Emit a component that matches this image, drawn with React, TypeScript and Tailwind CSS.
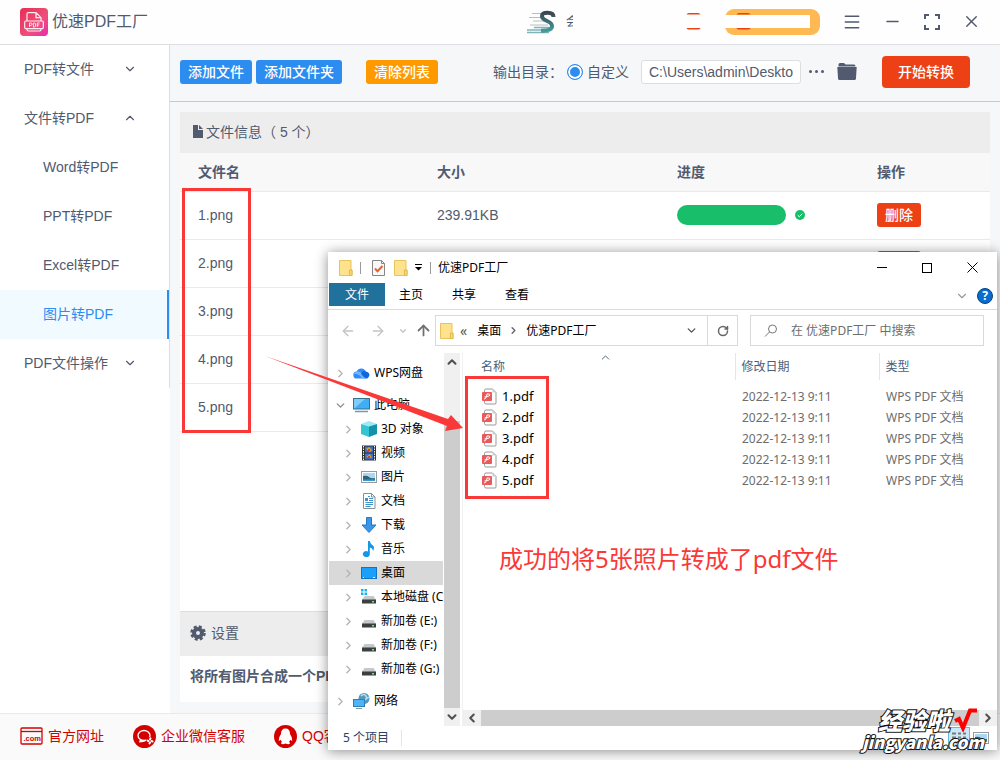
import type { ReactNode } from "react";
import {
    ArrowLeft,
    ArrowRight,
    ArrowUp,
    ChevronDown,
    ChevronLeft,
    ChevronRight,
    ChevronUp,
    Menu,
    Minus,
    RotateCw,
    Search,
    X,
} from "lucide-react";
import clsx from "clsx";

type MenuItem = {
    label: string;
    sub?: boolean;
    active?: boolean;
    arrow?: "up" | "down";
};

const menu: MenuItem[] = [
    { label: "PDF转文件", arrow: "down" },
    { label: "文件转PDF", arrow: "up" },
    { label: "Word转PDF", sub: true },
    { label: "PPT转PDF", sub: true },
    { label: "Excel转PDF", sub: true },
    { label: "图片转PDF", sub: true, active: true },
    { label: "PDF文件操作", arrow: "down" },
];

const images = [
    { name: "1.png", size: "239.91KB" },
    { name: "2.png" },
    { name: "3.png" },
    { name: "4.png" },
    { name: "5.png" },
];

const pdfs = ["1.pdf", "2.pdf", "3.pdf", "4.pdf", "5.pdf"];

/* ---------- icons ---------- */

function LogoIcon() {
    return (
        <svg viewBox="0 0 28 28" className="size-7" aria-hidden="true">
            <defs>
                <linearGradient id="logo" x1="0" y1="0" x2="1" y2="1">
                    <stop offset="0" stopColor="#e62e55" />
                    <stop offset="0.6" stopColor="#ee4f7b" />
                    <stop offset="1" stopColor="#e92bb0" />
                </linearGradient>
            </defs>
            <rect width="28" height="28" rx="4" fill="url(#logo)" />
            <g fill="none" stroke="#fff" strokeWidth="1.2" opacity="0.9">
                <path d="M7 13V6q0-1.300 1.300-1.300H16l5 5V13M16 5v4.700h5" />
                <rect x="4.700" y="13" width="18.600" height="7.600" rx="1" />
                <path d="M7 20.600v1q0 1.400 1.400 1.400h11.200q1.400 0 1.400-1.400v-1" />
            </g>
            <path
                d="M9.500 19v-4h1.600q1 0 1 1.200t-1 1.200H9.500M13.400 15v4h1q1.300 0 1.300-2t-1.300-2zM17.300 19v-4h2.300M17.300 17h2"
                fill="none"
                stroke="#fff"
                strokeWidth="0.8"
            />
        </svg>
    );
}

function SpeedIcon() {
    return (
        <svg viewBox="0 0 29 24" className="h-6 w-[29px]" aria-hidden="true">
            <defs>
                <linearGradient id="speed" x1="0" y1="0" x2="0" y2="1">
                    <stop offset="0" stopColor="#3b4650" />
                    <stop offset="1" stopColor="#459a9c" />
                </linearGradient>
            </defs>
            <path d="M5 3.500h12M2 7.500h13M6 11h12M3 15h18" stroke="#b4bfc1" strokeWidth="1" />
            <path d="M7 17.500h15M0 20h16M0 22.500h22" stroke="#7fb5b6" strokeWidth="1.300" />
            <path
                d="M26.500 7q0-4.300-6-4.300-6 0-5.500 3.800.3 2.500 5 4.500 5 2 5 5.300 0 4.500-11 4.500"
                fill="none"
                stroke="url(#speed)"
                strokeWidth="4"
            />
        </svg>
    );
}

function FolderIcon() {
    return (
        <svg viewBox="0 0 14 16" className="h-4 w-3.5 shrink-0" aria-hidden="true">
            <path d="M.5.5h11.500v9.500h1v5.500H.5z" fill="#ffe28d" stroke="#e6c35c" />
            <path d="M10.500 10h2.500v5.500h-2.500z" fill="#ffd969" stroke="#e0b84c" />
        </svg>
    );
}

function CheckDocIcon() {
    return (
        <svg viewBox="0 0 13 16" className="h-4 w-[13px]" aria-hidden="true">
            <path d="M.5.5h9l3 3v12H.5z" fill="#f8f8f8" stroke="#868686" />
            <path d="M9.500.5v3h3" fill="none" stroke="#868686" />
            <path d="M3 8.500l2.500 2.700L10.500 6" fill="none" stroke="#e8612c" strokeWidth="2" />
        </svg>
    );
}

function PdfIcon() {
    return (
        <svg viewBox="0 0 15 17" className="h-[17px] w-[15px] shrink-0" aria-hidden="true">
            <path d="M2.500 4V2.500q0-1.500 1.500-1.500h6.500l3.500 3.500V15q0 1-1 1H4q-1.500 0-1.500-1.500V13" fill="#fff" stroke="#999" />
            <path d="M10.500 1v3.500H14z" fill="#ccc" />
            <rect y="4" width="10" height="9" rx="1" fill="#ea5a5a" />
            <path d="M2 11q2 0 2.500-2.500L5 6h2q1 0 .8 1-.3 1.300-1.800 1.300L2.500 9" fill="none" stroke="#fff" strokeWidth="1" />
        </svg>
    );
}

function MonitorIcon() {
    return (
        <svg viewBox="0 0 17 16" className="h-4 w-[17px]">
            <rect x=".5" y="1.500" width="16" height="10.500" fill="#3faef5" stroke="#37718e" />
            <path d="M1 11.500V2h11z" fill="#7fcdfb" />
            <path d="M2 14.500h13" stroke="#7d97a5" strokeWidth="1.500" />
        </svg>
    );
}

function DriveIcon({ system }: { system?: boolean }) {
    return (
        <svg viewBox="0 0 16 16" className="size-4">
            <path d="M3.500 7h9L15 11H1z" fill="#c5c8ca" />
            <rect x="1" y="10.500" width="14" height="4" fill="#3c3f41" />
            <rect x="11" y="12" width="2" height="1.500" fill="#5df070" />
            {system && <path d="M0 0h2.500v2.500H0zM3.500 0H6v2.500H3.500zM0 3.500h2.500V6H0zM3.500 3.500H6V6H3.500z" fill="#18b4e8" />}
        </svg>
    );
}

const treeIcons: Record<string, ReactNode> = {
    cloud: (
        <svg viewBox="0 0 17 16" className="h-4 w-[17px]">
            <path d="M4 13.500a3.500 3.500 0 0 1-.3-7A5 5 0 0 1 13 6.800a3.400 3.400 0 0 1 .5 6.700z" fill="#2f8cf5" />
            <path d="M3.700 6.500q4-.5 6 3t5.500 3.500l-1.700.5H9q-2-5-8-4.500.5-2 2.700-2.500z" fill="#6db6ff" />
            <path d="M8 8.500q2-4 5-1.700 3.500.5 3.500 3.500l-2.300 3q-3.700-.3-6.200-4.800z" fill="#1266dd" />
        </svg>
    ),
    pc: <MonitorIcon />,
    cube: (
        <svg viewBox="0 0 16 16" className="size-4">
            <path d="M0 3l8-3 8 3-8 2.500z" fill="#9ceaf2" />
            <path d="M0 3l8 2.500V16l-8-3z" fill="#35c3d6" />
            <path d="M16 3L8 5.500V16l8-3z" fill="#1492aa" />
        </svg>
    ),
    video: (
        <svg viewBox="0 0 16 16" className="size-4">
            <rect x="1" y="0.500" width="14" height="15" fill="#333" />
            <path d="M2.500 1v14M13.500 1v14" stroke="#eee" strokeDasharray="1.500 1" />
            <rect x="4" y="1.500" width="8" height="6" fill="#3f6fc8" />
            <rect x="4" y="8.500" width="8" height="6" fill="#3f6fc8" />
            <path d="M5 4l3-2 3 3-2 2zM5 12l4-3 2 4z" fill="#d8a532" />
            <path d="M7 4h2v2H7zM7 11h2v2H7z" fill="#d33c2b" />
        </svg>
    ),
    picture: (
        <svg viewBox="0 0 16 16" className="size-4">
            <rect x=".5" y="2.500" width="15" height="11" fill="#fff" stroke="#999" />
            <rect x="2" y="4" width="12" height="8" fill="#a9d9f2" />
            <path d="M2 7q4-1 6 1t6 1v3H2z" fill="#2f6577" />
            <path d="M2 10.500h12V12H2z" fill="#3a9ad1" />
        </svg>
    ),
    doc: (
        <svg viewBox="0 0 16 16" className="size-4">
            <path d="M2.500.5h8l3.500 3.500v11.500H2.500z" fill="#fff" stroke="#8a8f94" />
            <path d="M10.500.5v3.500H14" fill="none" stroke="#8a8f94" />
            <path d="M7 3.500h2M8 5.500h4M8 7.500h4M4.500 9.500h7.500M4.500 11.500h7.500M4.500 13.500h5" stroke="#3d93c9" />
            <path d="M4 5h3v3H4z" fill="#3d93c9" />
        </svg>
    ),
    download: (
        <svg viewBox="0 0 16 16" className="size-4">
            <path d="M5.500.5h5V8h4.500L8 15.500 1 8h4.500z" fill="#3b96e8" stroke="#2679c4" />
        </svg>
    ),
    music: (
        <svg viewBox="0 0 16 16" className="size-4">
            <path d="M7 0h1.800q.5 3 3.200 4.500 2 2 0 5.500-.2-3-3.200-3.500v6.200A3.500 3 0 1 1 7 10.500z" fill="#1597e8" />
        </svg>
    ),
    desktop: (
        <svg viewBox="0 0 16 16" className="size-4">
            <rect x=".5" y="2.500" width="15" height="11" fill="#1aa0fb" stroke="#1174c4" />
            <path d="M2 12.500h1M12 12.500h2" stroke="#fff" />
        </svg>
    ),
    system: <DriveIcon system />,
    drive: <DriveIcon />,
    network: (
        <svg viewBox="0 0 17 16" className="h-4 w-[17px]">
            <circle cx="11" cy="5.500" r="5.500" fill="#5599bd" />
            <path d="M8 3q3-3 5 0t-2 4M13 6l3-2" fill="none" stroke="#b8e0ef" strokeWidth="1.500" />
            <rect x=".5" y="6.500" width="11" height="7" fill="#4db5f7" stroke="#2c7fb4" />
            <path d="M3 15.500h6" stroke="#7d97a5" />
        </svg>
    ),
};

const tree = [
    { label: "WPS网盘", icon: "cloud", root: true },
    { label: "此电脑", icon: "pc", root: true, open: true },
    { label: "3D 对象", icon: "cube" },
    { label: "视频", icon: "video" },
    { label: "图片", icon: "picture" },
    { label: "文档", icon: "doc" },
    { label: "下载", icon: "download" },
    { label: "音乐", icon: "music" },
    { label: "桌面", icon: "desktop", selected: true },
    { label: "本地磁盘 (C:)", icon: "system" },
    { label: "新加卷 (E:)", icon: "drive" },
    { label: "新加卷 (F:)", icon: "drive" },
    { label: "新加卷 (G:)", icon: "drive" },
    { label: "网络", icon: "network", root: true },
];

/* ---------- converter app ---------- */

function Badge() {
    return (
        <svg viewBox="0 0 15 17" className="h-[17px] w-[15px] shrink-0" fill="#ed4014" aria-hidden="true">
            <path d="M3 0h9q2 0 2.500 1.500H.5Q1 0 3 0zM.5 15h14q-.5 1.500-2.500 1.500H3Q1 16.500.5 15z" />
        </svg>
    );
}

function Header() {
    return (
        <header className="flex h-[45px] items-center border-b border-[#dcdee2] bg-[#fefefe] pr-[19px] pb-px pl-5">
            <LogoIcon />
            <h1 className="ml-1 text-base">优速PDF工厂</h1>
            <div className="ml-auto flex items-center">
                <SpeedIcon />
                <span className="ml-2.5 w-[7px] overflow-hidden text-xs">会</span>
                <span className="ml-[113px]"><Badge /></span>
                <div className="ml-6 flex h-[26px] w-[95px] items-center rounded-[9px] bg-[#ffb953]">
                    <div className="flex h-[13px] w-[85px] items-center bg-white pl-[11px]">
                        <Badge />
                    </div>
                </div>
            </div>
            <div className="ml-[22px] flex items-center gap-[21px]">
                <button aria-label="菜单"><Menu size={20} strokeWidth={1.8} /></button>
                <button aria-label="最小化"><Minus size={19} strokeWidth={1.8} /></button>
                <button aria-label="最大化">
                    <svg viewBox="0 0 18 18" className="size-[18px]" fill="none" stroke="currentColor" strokeWidth="2">
                        <path d="M2 6V2h4M12 2h4v4M16 12v4h-4M6 16H2v-4" />
                    </svg>
                </button>
                <button aria-label="关闭"><X size={19} strokeWidth={1.8} /></button>
            </div>
        </header>
    );
}

function Sidebar() {
    return (
        <aside className="w-[170px] shrink-0 bg-white">
            <nav className="border-r border-[#dcdee2]">
                {menu.map((m) => (
                    <button
                        key={m.label}
                        className={clsx(
                            "flex h-[49px] w-full items-center justify-between pr-8 pb-0.5 text-sm",
                            m.sub ? "pl-[43px]" : "pl-6",
                            m.active && "border-r-2 border-[#2d8cf0] bg-[#f0faff] text-[#2d8cf0]"
                        )}
                    >
                        {m.label}
                        {m.arrow === "down" && <ChevronDown size={14} />}
                        {m.arrow === "up" && <ChevronUp size={14} />}
                    </button>
                ))}
            </nav>
        </aside>
    );
}

function Toolbar() {
    return (
        <div className="flex h-[57px] items-center border-b border-[#c5c8ce] pr-[30px] pb-[3px] pl-2.5 text-sm">
            <button className="h-6 rounded-[3px] bg-[#2d8cf0] px-2 font-medium text-white">添加文件</button>
            <button className="ml-1 h-6 rounded-[3px] bg-[#2d8cf0] px-2 font-medium text-white">添加文件夹</button>
            <button className="ml-6 h-6 rounded-[3px] bg-[#ff9900] px-2 font-medium text-white">清除列表</button>
            <div className="ml-auto flex items-center">
                <span>输出目录：</span>
                <label className="ml-1 flex items-center gap-1">
                    <input
                        type="radio"
                        name="output"
                        defaultChecked
                        className="size-4 appearance-none rounded-full border border-[#2d8cf0] bg-[#2d8cf0] shadow-[inset_0_0_0_2px_white]"
                    />
                    自定义
                </label>
                <input
                    aria-label="输出目录"
                    defaultValue="C:\Users\admin\Deskto"
                    className="ml-3 h-6 w-40 rounded-[3px] border border-[#dcdee2] bg-white px-[7px]"
                />
                <button aria-label="更多" className="ml-2 flex w-[15px] justify-between">
                    <span className="size-[3px] rounded-full bg-[#515a6e]" />
                    <span className="size-[3px] rounded-full bg-[#515a6e]" />
                    <span className="size-[3px] rounded-full bg-[#515a6e]" />
                </button>
                <button aria-label="打开目录" className="ml-[13px]">
                    <svg viewBox="0 0 20 17" className="h-[17px] w-5" fill="#515a6e">
                        <path d="M1.500 3.500V1.500Q1.500 0 3 0h4l1.500 1.500H17q1.500 0 1.500 2z" />
                        <path d="M.3 4h19.400L19 15.500q-.2 1.500-1.500 1.500h-15Q1.200 17 1 15.500z" />
                    </svg>
                </button>
                <button className="ml-[25px] h-8 w-[88px] rounded bg-[#ed4014] font-medium text-white">开始转换</button>
            </div>
        </div>
    );
}

function FileTable() {
    return (
        <div className="relative">
            <table className="w-full table-fixed text-left text-sm">
                <thead>
                    <tr className="h-[38px] border-b border-[#e8eaec] bg-[#f8f8f9]">
                        <th className="w-[239px] px-[18px] font-bold">文件名</th>
                        <th className="w-60 px-[18px] font-bold">大小</th>
                        <th className="w-[200px] px-[18px] font-bold">进度</th>
                        <th className="px-[18px] font-bold">操作</th>
                    </tr>
                </thead>
                <tbody>
                    {images.map((img) => (
                        <tr key={img.name} className="h-12 border-b border-[#e8eaec]">
                            <td className="px-[18px]">{img.name}</td>
                            <td className="px-[18px]">{img.size}</td>
                            <td className="px-[18px]">
                                <div className="flex items-center gap-[9px]">
                                    <div className="h-5 w-[109px] rounded-full bg-[#19be6b]" />
                                    <svg viewBox="0 0 10 10" className="size-2.5">
                                        <circle cx="5" cy="5" r="5" fill="#19be6b" />
                                        <path d="M2.700 5.200l1.600 1.500 3-3" fill="none" stroke="#fff" />
                                    </svg>
                                </div>
                            </td>
                            <td className="px-[18px]">
                                <button className="block h-6 w-11 rounded-[3px] bg-[#ed4014] font-medium text-white">删除</button>
                            </td>
                        </tr>
                    ))}
                </tbody>
            </table>
            <div className="absolute top-[35px] left-0.5 h-[245px] w-[69px] border-3 border-[#fb3838]" />
        </div>
    );
}

function Footer() {
    return (
        <footer className="flex h-[47px] items-center gap-[29px] border-t border-[#e8eaec] bg-[#fafafa] pb-0.5 pl-5 text-sm text-[#d40000]">
            <a href="#site" className="flex items-center gap-[5px]">
                <svg viewBox="0 0 23 18" className="h-[18px] w-[23px]">
                    <rect x="1" y="1" width="21" height="16" rx="1" fill="none" stroke="currentColor" strokeWidth="1.300" />
                    <path d="M1 4.500h21" stroke="currentColor" strokeWidth="1.300" />
                    <text x="3.500" y="14" fontSize="7.500" fontWeight="bold" fill="currentColor">.com</text>
                </svg>
                官方网址
            </a>
            <a href="#wechat" className="flex items-center gap-[5px]">
                <svg viewBox="0 0 23 23" className="size-[23px]">
                    <circle cx="11.500" cy="11.500" r="11.500" fill="currentColor" />
                    <ellipse cx="11" cy="10.500" rx="6" ry="5" fill="none" stroke="#fff" strokeWidth="1.300" />
                    <path d="M6 17.500l1-3.500 4 1.700 2 .3-2.800 1q-2 .1-4.200.5z" fill="#fff" />
                    <circle cx="17" cy="16" r="4" fill="currentColor" />
                    <path d="M14.500 15.500l1 .6M17.500 13.300l-.5 1M16.500 18.500l.6-1M19.500 16.500l-1-.5" stroke="#fff" strokeWidth="2" strokeLinecap="round" />
                </svg>
                企业微信客服
            </a>
            <a href="#qq" className="flex items-center gap-[5px]">
                <svg viewBox="0 0 23 23" className="size-[23px]">
                    <circle cx="11.500" cy="11.500" r="11.500" fill="currentColor" />
                    <path
                        d="M11.500 3.500q-4.500 0-4.500 5.500-2.500 3.500-2.300 6.500.6 1 2-.8.5 1.600 1.300 2.300-1.500.8-.8 1.800 1.500 1 4.300-.3 2.800 1.300 4.300.3.700-1-.8-1.800.8-.7 1.300-2.300 1.400 1.800 2 .8.200-3-2.300-6.500 0-5.500-4.500-5.500z"
                        fill="#fff"
                    />
                </svg>
                QQ客服
            </a>
        </footer>
    );
}

/* ---------- explorer window ---------- */

function TitleBar() {
    return (
        <div className="flex h-[31px] items-center pl-[11px]">
            <FolderIcon />
            <span className="ml-[7px] h-3 w-px bg-[#999]" />
            <span className="ml-[11px]"><CheckDocIcon /></span>
            <span className="ml-[9px]"><FolderIcon /></span>
            <svg viewBox="0 0 7 7" className="ml-[7px] size-[7px]">
                <path d="M0 .5h7" stroke="#000" />
                <path d="M0 3h7L3.500 6.500z" />
            </svg>
            <span className="ml-2 h-3 w-px bg-[#999]" />
            <span className="ml-[7px]">优速PDF工厂</span>
            <div className="ml-auto flex pr-px">
                <button aria-label="最小化" className="flex h-[30px] w-[45px] items-center justify-center">
                    <span className="h-px w-2.5 bg-black" />
                </button>
                <button aria-label="最大化" className="flex h-[30px] w-[45px] items-center justify-center">
                    <span className="size-2.5 border border-black" />
                </button>
                <button aria-label="关闭" className="flex h-[30px] w-[47px] items-center justify-center">
                    <svg viewBox="0 0 11 11" className="size-[11px]" stroke="#000">
                        <path d="M.5.5l10 10M10.500.5l-10 10" />
                    </svg>
                </button>
            </div>
        </div>
    );
}

function Ribbon() {
    return (
        <div className="flex h-[27px] items-start border-b border-[#dadbdc] pr-1 pl-px">
            <button className="h-[23px] w-14 bg-[#20719c] text-white">文件</button>
            <button className="ml-[14px] h-6">主页</button>
            <button className="ml-[29px] h-6">共享</button>
            <button className="ml-[29px] h-6">查看</button>
            <button aria-label="展开功能区" className="mt-1.5 ml-auto text-[#999]"><ChevronDown size={14} /></button>
            <button aria-label="帮助" className="mt-[5px] ml-2 size-4 rounded-full border border-[#00457e] bg-[#0a6cce] text-xs leading-[14px] font-bold text-white">?</button>
        </div>
    );
}

function AddressBar() {
    return (
        <div className="flex h-[41px] items-center pr-[13px] pl-3 text-[#c4c4c4]">
            <ArrowLeft size={16} strokeWidth={2} />
            <ArrowRight size={16} strokeWidth={2} className="ml-[14px]" />
            <ChevronDown size={10} strokeWidth={3} className="ml-3" />
            <ArrowUp size={17} strokeWidth={2.5} className="ml-[7px] text-[#707070]" />
            <div className="ml-[3px] flex h-[31px] w-[303px] items-center border border-[#d9d9d9] pl-1 text-black">
                <FolderIcon />
                <span className="ml-1.5 text-sm text-[#555]">«</span>
                <span className="ml-2.5">桌面</span>
                <ChevronRight size={11} strokeWidth={3} className="ml-[7px] text-[#666]" />
                <span className="ml-[7px]">优速PDF工厂</span>
                <ChevronDown size={13} strokeWidth={2.5} className="ml-auto text-[#555]" />
                <button aria-label="刷新" className="ml-[9px] flex h-full w-[30px] items-center justify-center border-l border-[#d9d9d9] text-[#666]">
                    <RotateCw size={12} strokeWidth={3} />
                </button>
            </div>
            <label className="ml-3 flex h-[31px] flex-1 items-center border border-[#d9d9d9] pl-[13px] text-[#777]">
                <svg viewBox="0 0 14 14" className="size-3.5" fill="none" stroke="currentColor">
                    <circle cx="8.500" cy="5" r="4" />
                    <path d="M5.500 8L1 12.500" />
                </svg>
                <input
                    aria-label="搜索"
                    placeholder="在 优速PDF工厂 中搜索"
                    className="ml-[13px] min-w-0 flex-1 placeholder:text-[#6d6d6d]"
                />
            </label>
        </div>
    );
}

function NavTree() {
    return (
        <ul className="ml-px w-[114px] shrink-0 overflow-hidden pt-2">
            {tree.map((t, i) => (
                <li
                    key={t.label}
                    className={clsx(
                        "flex h-6 items-center whitespace-nowrap",
                        t.root ? "pl-[5px]" : "pl-[13px]",
                        t.root && i > 0 && "mt-2",
                        t.selected && "bg-[#d9d9d9]"
                    )}
                >
                    <span className={clsx("w-[19px] shrink-0", t.open ? "text-[#8a8a8a]" : "text-[#b4b4b4]")}>
                        {t.open ? <ChevronDown size={13} strokeWidth={2.5} /> : <ChevronRight size={13} strokeWidth={2.5} />}
                    </span>
                    <span className="mr-1 shrink-0">{treeIcons[t.icon]}</span>
                    <span>{t.label}</span>
                </li>
            ))}
        </ul>
    );
}

function FileList() {
    return (
        <div className="relative flex min-w-0 flex-1 flex-col border-l border-[#f0f0f0]">
            <table className="w-full table-fixed text-left text-[#6d6d6d]">
                <thead>
                    <tr className="h-[27px] text-[#4c607a]">
                        <th className="w-[272px] pl-[18px] font-normal">
                            <div className="relative">
                                名称
                                <ChevronUp size={13} strokeWidth={1.8} className="absolute -top-2 left-[118px]" />
                            </div>
                        </th>
                        <th className="w-36 border-l border-[#e5e5e5] pl-1.5 font-normal">修改日期</th>
                        <th className="border-l border-[#e5e5e5] pl-1.5 font-normal">类型</th>
                    </tr>
                </thead>
                <tbody className="before:block before:h-1.5">
                    {pdfs.map((name) => (
                        <tr key={name} className="h-[21px]">
                            <td className="pl-[19px] text-black">
                                <div className="flex items-center gap-[5px] pb-px text-[13px] leading-5">
                                    <PdfIcon />
                                    {name}
                                </div>
                            </td>
                            <td className="pl-[7px]">2022-12-13 9:11</td>
                            <td className="pl-[7px]">WPS PDF 文档</td>
                        </tr>
                    ))}
                </tbody>
            </table>
            <div className="absolute top-[23px] left-0.5 h-[123px] w-[84px] border-3 border-[#fb3838]" />
            <p className="mt-[52px] pl-9 text-2xl text-[#fb3838]">成功的将5张照片转成了pdf文件</p>
            <div className="mt-auto flex h-4 items-center bg-[#f0f0f0] text-[#505050]">
                <ChevronLeft size={14} strokeWidth={3.5} className="mx-0.5 shrink-0" />
                <div className="h-full flex-1 bg-[#cdcdcd]" />
                <ChevronRight size={14} strokeWidth={3.5} className="mx-0.5 shrink-0" />
            </div>
        </div>
    );
}

function ExplorerWindow() {
    return (
        <section className="absolute top-[252px] right-[3px] left-[328px] bg-white font-['Noto_Sans','Noto_Sans_CJK_SC',sans-serif] text-xs text-black shadow-[0_1px_12px_rgba(0,0,0,0.45)]">
            <TitleBar />
            <Ribbon />
            <AddressBar />
            <div className="flex h-[375px] pt-0.5">
                <NavTree />
                <div className="mr-0.5 ml-px flex w-4 shrink-0 flex-col items-center bg-[#f0f0f0] text-[#505050]">
                    <ChevronUp size={14} strokeWidth={3.5} className="my-0.5" />
                    <div className="mt-[50px] w-full flex-1 bg-[#cdcdcd]" />
                    <ChevronDown size={14} strokeWidth={3.5} className="my-0.5" />
                </div>
                <FileList />
            </div>
            <div className="flex h-6 items-center pr-2 pl-[15px] text-[#2b4163]">
                <span>5 个项目</span>
                <span className="ml-3 h-4 w-px bg-[#e5e5e5]" />
                <button aria-label="详细信息" className="ml-auto flex h-[22px] w-[22px] items-center justify-center border border-[#6bb8de] bg-[#cce8f6]">
                    <svg viewBox="0 0 16 14" className="h-3.5 w-4" fill="none" stroke="#7a7a7a">
                        <path d="M1 2.500h4M7 2.500h3M12 2.500h3M1 6.500h4M7 6.500h3M12 6.500h3M1 10.500h4M7 10.500h3M12 10.500h3" strokeWidth="2" />
                    </svg>
                </button>
                <button aria-label="大图标" className="ml-[3px]">{treeIcons.picture}</button>
            </div>
        </section>
    );
}

function Watermark() {
    return (
        <div className="absolute right-4 bottom-2 font-['Noto_Sans_CJK_SC',sans-serif] font-black text-white italic [-webkit-text-stroke:2px_#111] [paint-order:stroke_fill]">
            <div className="flex items-center justify-end gap-1 pr-1.5 text-2xl leading-6">
                经验啦
                <svg viewBox="0 0 24 24" className="size-6" fill="none" stroke="#f00" strokeWidth="4">
                    <path d="M1 13l4-2 4 9L16 2.500h7" />
                </svg>
            </div>
            <div className="text-right text-[17px] leading-5">jingyanla.com</div>
        </div>
    );
}

export default function App() {
    return (
        <div className="relative flex min-h-screen flex-col overflow-hidden bg-[#f5f7f9] font-['Liberation_Sans','Noto_Sans_CJK_SC',sans-serif] text-[#515a6e]">
            <Header />
            <div className="flex flex-1">
                <Sidebar />
                <main className="flex min-w-0 flex-1 flex-col">
                    <Toolbar />
                    <div className="flex flex-1 flex-col p-2.5 pb-[11px]">
                        <div className="flex flex-1 flex-col bg-white">
                            <div className="flex h-[41px] items-center bg-[#ededed] pb-0.5 pl-3 text-sm">
                                <svg viewBox="0 0 12 13" className="mr-0.5 h-[13px] w-3" fill="#515a6e">
                                    <path d="M1 0h5v5h5v8H1z" />
                                    <path d="M7 0l4 4H7z" />
                                </svg>
                                文件信息（ 5 个）
                            </div>
                            <FileTable />
                            <div className="mt-auto flex h-[45px] items-center gap-[5px] border-t border-[#dcdee2] bg-[#ededed] pb-0.5 pl-2.5 text-sm">
                                <svg viewBox="0 0 16 16" className="size-4" fill="none" stroke="#515a6e">
                                    <circle cx="8" cy="8" r="4" strokeWidth="4" />
                                    <circle cx="8" cy="8" r="6.500" strokeWidth="2.500" strokeDasharray="3 2.105" />
                                </svg>
                                设置
                            </div>
                            <div className="h-[46px] pt-2.5 pl-2.5 text-sm font-bold">将所有图片合成一个PDF</div>
                        </div>
                    </div>
                </main>
            </div>
            <Footer />
            <ExplorerWindow />
            <svg viewBox="0 0 200 80" className="absolute top-[353px] left-[265px] h-20 w-[200px]" fill="#fb3838" aria-hidden="true">
                <path d="M0 3L183 66l3-4 12 13-18 3 2-5z" />
            </svg>
            <Watermark />
        </div>
    );
}
